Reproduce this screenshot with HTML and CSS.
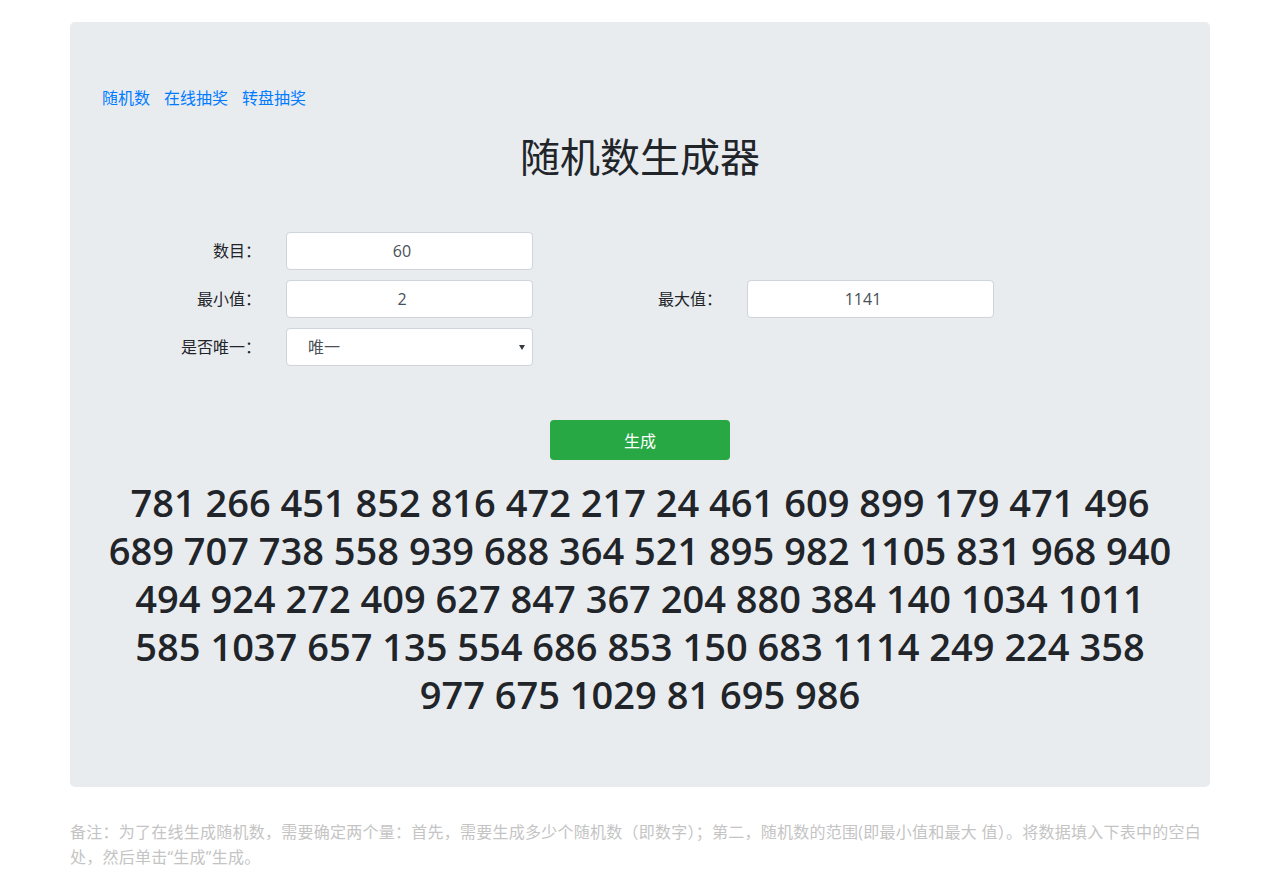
FILE: index.html
```html
<!DOCTYPE html>
<html lang="zh-CN">
<head>
<meta charset="UTF-8">
<meta name="viewport" content="width=device-width, initial-scale=1.0">
<title>随机数生成器</title>
<link rel="stylesheet" href="styles.css">
</head>
<body>
<div class="container">
  <div class="jumbotron">
    <div class="nav-links">
      <a href="#">随机数</a>
      <a href="#">在线抽奖</a>
      <a href="#">转盘抽奖</a>
    </div>

    <h1 class="title">随机数生成器</h1>

    <form class="generator" action="#">
      <div class="form-row">
        <label for="count">数目：</label>
        <input type="number" id="count" class="form-control" value="60">
      </div>
      <div class="form-row">
        <label for="min">最小值：</label>
        <input type="number" id="min" class="form-control" value="2">
        <label for="max">最大值：</label>
        <input type="number" id="max" class="form-control" value="1141">
      </div>
      <div class="form-row">
        <label for="unique">是否唯一：</label>
        <div class="select-wrap">
          <select id="unique" class="form-control">
            <option>唯一</option>
            <option>不唯一</option>
          </select>
        </div>
      </div>
      <div class="actions">
        <button type="button" class="btn-generate">生成</button>
      </div>
    </form>

    <div class="result">781 266 451 852 816 472 217 24 461 609 899 179 471 496 689 707 738 558 939 688 364 521 895 982 1105 831 968 940 494 924 272 409 627 847 367 204 880 384 140 1034 1011 585 1037 657 135 554 686 853 150 683 1114 249 224 358 977 675 1029 81 695 986</div>
  </div>

  <p class="note">备注：为了在线生成随机数，需要确定两个量：首先，需要生成多少个随机数（即数字）；第二，随机数的范围(即最小值和最大 值）。将数据填入下表中的空白处，然后单击“生成”生成。</p>
</div>
</body>
</html>
```

FILE: styles.css
```css
:root {
  --fundo: #e9ecef;
  --texto: #212529;
  --link: #007bff;
  --borda: #ced4da;
  --verde: #28a745;
}

body {
  margin: 0;
  padding: 22px 0 0 70px;
  font-family: "Open Sans", "Noto Sans CJK SC", sans-serif;
  font-size: 16px;
  line-height: 24px;
  color: var(--texto);
  background: #fff;
}

.container {
  width: 1140px;
}

.jumbotron {
  background: var(--fundo);
  border-radius: 5px;
  padding: 64px 32px;
}

.nav-links {
  display: flex;
  gap: 14px;
}

.nav-links a {
  color: var(--link);
  text-decoration: none;
}

.title {
  margin: 23px 0 0;
  font-size: 40px;
  line-height: 48px;
  font-weight: 400;
  text-align: center;
}

.generator {
  margin-top: 51px;
}

.form-row {
  display: grid;
  grid-template-columns: 184px 247px 214px 247px;
  align-items: center;
  margin-bottom: 10px;
}

/* pontuação centrada, como no original */
.form-row label {
  font-family: "Open Sans", "Noto Sans CJK JP", sans-serif;
  text-align: right;
  padding-right: 25px;
}

.form-control {
  box-sizing: border-box;
  width: 100%;
  height: 38px;
  border: 1px solid var(--borda);
  border-radius: 4px;
  background: #fff;
  color: #495057;
  font-family: inherit;
  font-size: 16px;
  text-align: center;
  margin: 0;
  padding: 0 12px;
}

input.form-control::-webkit-inner-spin-button {
  opacity: 0;
}

.select-wrap {
  position: relative;
}

.select-wrap select {
  appearance: none;
  -webkit-appearance: none;
  text-align: left;
  padding: 0 28px 0 21px;
}

.select-wrap::after {
  content: "";
  position: absolute;
  right: 8px;
  top: 17px;
  border-left: 3px solid transparent;
  border-right: 3px solid transparent;
  border-top: 5px solid #343a40;
}

.actions {
  display: flex;
  justify-content: center;
  margin-top: 54px;
}

.btn-generate {
  width: 180px;
  height: 40px;
  border: none;
  border-radius: 4px;
  background: var(--verde);
  color: #fff;
  font-family: inherit;
  font-size: 16px;
  cursor: pointer;
}

.result {
  margin: 18px 0 5px;
  font-size: 38px;
  line-height: 48px;
  font-weight: 600;
  text-align: center;
}

.note {
  margin: 33px 0 0;
  color: #c4c4c4;
  line-height: 25px;
  letter-spacing: 0.25px;
}
```
